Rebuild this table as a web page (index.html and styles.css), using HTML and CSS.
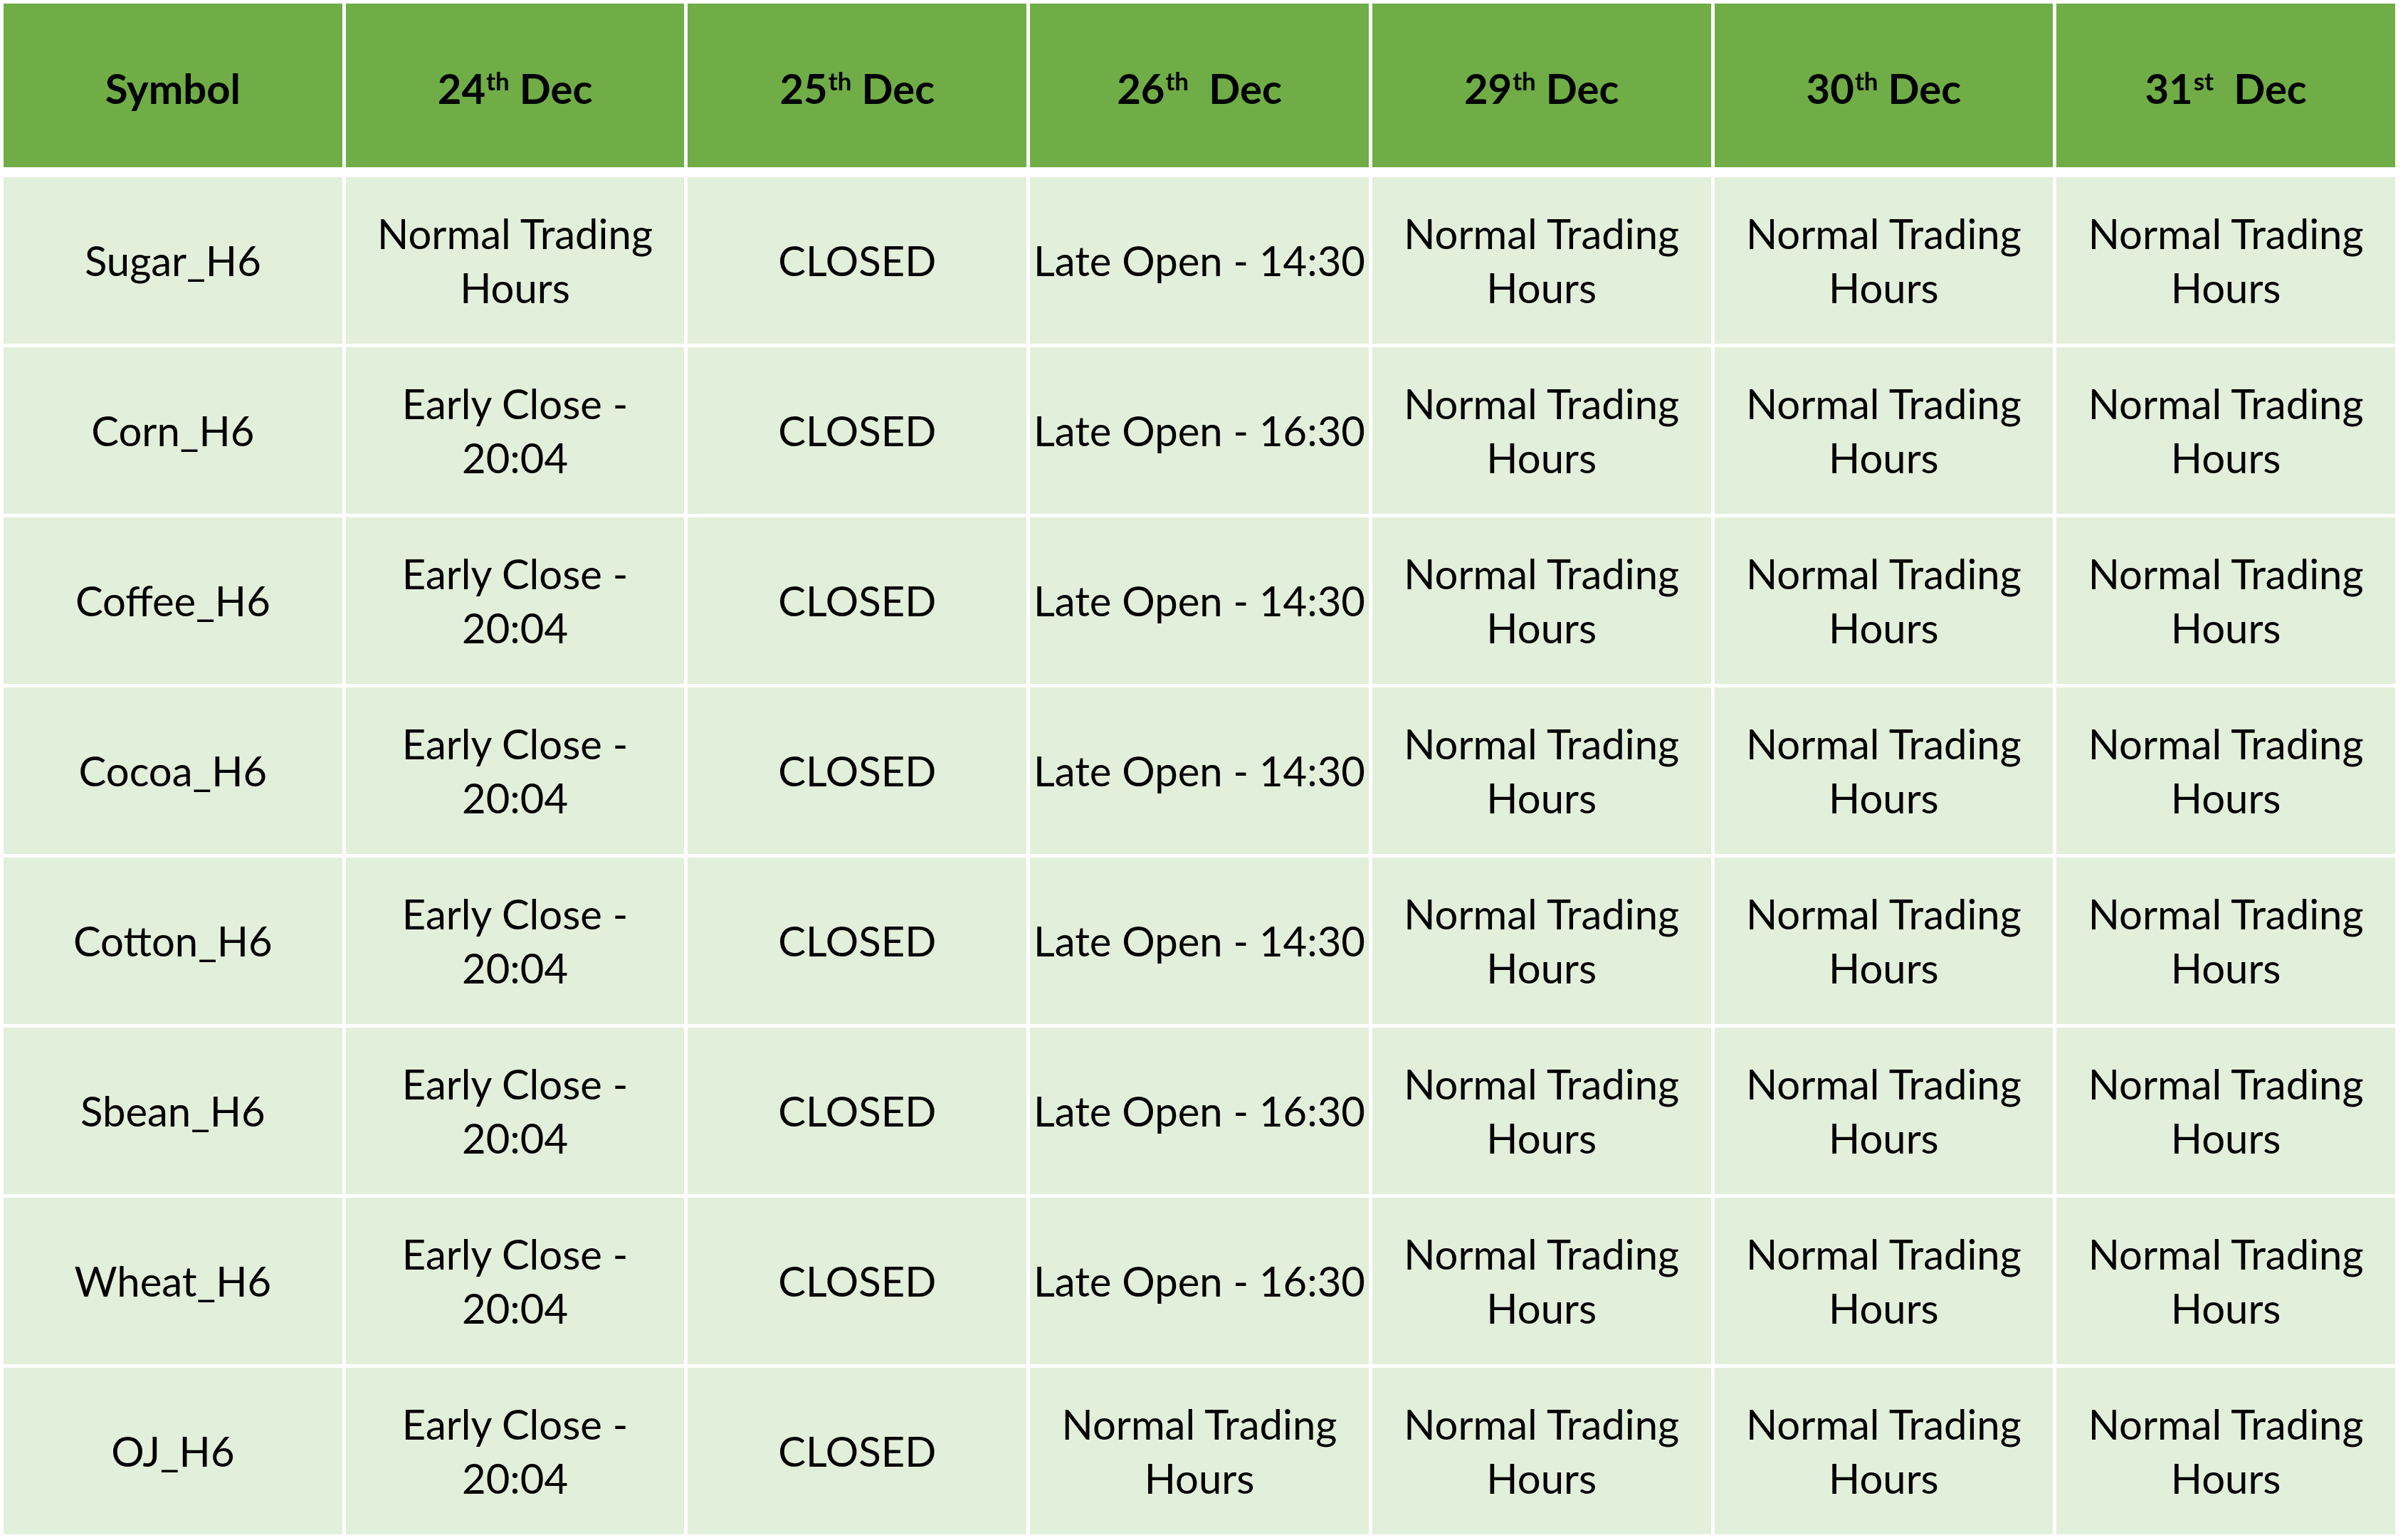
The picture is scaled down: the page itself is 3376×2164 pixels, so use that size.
FILE: index.html
```html
<!DOCTYPE html>
<html lang="en">
<head>
<meta charset="utf-8">
<title>Holiday Trading Hours</title>
<link rel="stylesheet" href="styles.css">
</head>
<body>
<div class="schedule">
  <div class="head">
    <div class="hcell"><span>Symbol</span></div>
    <div class="hcell"><span>24<sup>th</sup> Dec</span></div>
    <div class="hcell"><span>25<sup>th</sup> Dec</span></div>
    <div class="hcell"><span>26<sup>th</sup>&nbsp; Dec</span></div>
    <div class="hcell"><span>29<sup>th</sup> Dec</span></div>
    <div class="hcell"><span>30<sup>th</sup> Dec</span></div>
    <div class="hcell"><span>31<sup>st</sup>&nbsp; Dec</span></div>
  </div>
  <div class="body">
    <div class="cell"><span>Sugar_H6</span></div>
    <div class="cell"><span>Normal Trading<br>Hours</span></div>
    <div class="cell"><span>CLOSED</span></div>
    <div class="cell"><span>Late Open - 14:30</span></div>
    <div class="cell"><span>Normal Trading<br>Hours</span></div>
    <div class="cell"><span>Normal Trading<br>Hours</span></div>
    <div class="cell"><span>Normal Trading<br>Hours</span></div>

    <div class="cell"><span>Corn_H6</span></div>
    <div class="cell"><span>Early Close -<br>20:04</span></div>
    <div class="cell"><span>CLOSED</span></div>
    <div class="cell"><span>Late Open - 16:30</span></div>
    <div class="cell"><span>Normal Trading<br>Hours</span></div>
    <div class="cell"><span>Normal Trading<br>Hours</span></div>
    <div class="cell"><span>Normal Trading<br>Hours</span></div>

    <div class="cell"><span>Coffee_H6</span></div>
    <div class="cell"><span>Early Close -<br>20:04</span></div>
    <div class="cell"><span>CLOSED</span></div>
    <div class="cell"><span>Late Open - 14:30</span></div>
    <div class="cell"><span>Normal Trading<br>Hours</span></div>
    <div class="cell"><span>Normal Trading<br>Hours</span></div>
    <div class="cell"><span>Normal Trading<br>Hours</span></div>

    <div class="cell"><span>Cocoa_H6</span></div>
    <div class="cell"><span>Early Close -<br>20:04</span></div>
    <div class="cell"><span>CLOSED</span></div>
    <div class="cell"><span>Late Open - 14:30</span></div>
    <div class="cell"><span>Normal Trading<br>Hours</span></div>
    <div class="cell"><span>Normal Trading<br>Hours</span></div>
    <div class="cell"><span>Normal Trading<br>Hours</span></div>

    <div class="cell"><span>Cotton_H6</span></div>
    <div class="cell"><span>Early Close -<br>20:04</span></div>
    <div class="cell"><span>CLOSED</span></div>
    <div class="cell"><span>Late Open - 14:30</span></div>
    <div class="cell"><span>Normal Trading<br>Hours</span></div>
    <div class="cell"><span>Normal Trading<br>Hours</span></div>
    <div class="cell"><span>Normal Trading<br>Hours</span></div>

    <div class="cell"><span>Sbean_H6</span></div>
    <div class="cell"><span>Early Close -<br>20:04</span></div>
    <div class="cell"><span>CLOSED</span></div>
    <div class="cell"><span>Late Open - 16:30</span></div>
    <div class="cell"><span>Normal Trading<br>Hours</span></div>
    <div class="cell"><span>Normal Trading<br>Hours</span></div>
    <div class="cell"><span>Normal Trading<br>Hours</span></div>

    <div class="cell"><span>Wheat_H6</span></div>
    <div class="cell"><span>Early Close -<br>20:04</span></div>
    <div class="cell"><span>CLOSED</span></div>
    <div class="cell"><span>Late Open - 16:30</span></div>
    <div class="cell"><span>Normal Trading<br>Hours</span></div>
    <div class="cell"><span>Normal Trading<br>Hours</span></div>
    <div class="cell"><span>Normal Trading<br>Hours</span></div>

    <div class="cell"><span>OJ_H6</span></div>
    <div class="cell"><span>Early Close -<br>20:04</span></div>
    <div class="cell"><span>CLOSED</span></div>
    <div class="cell"><span>Normal Trading<br>Hours</span></div>
    <div class="cell"><span>Normal Trading<br>Hours</span></div>
    <div class="cell"><span>Normal Trading<br>Hours</span></div>
    <div class="cell"><span>Normal Trading<br>Hours</span></div>
  </div>
</div>
</body>
</html>
```
FILE: styles.css
```css
html, body {
  margin: 0;
  padding: 0;
  background: #ffffff;
}

body {
  font-family: Lato, "Open Sans", "Liberation Sans", sans-serif;
  color: #000000;
}

.schedule {
  width: 3360px;
  margin: 5px 0 0 5px;
  display: flex;
  flex-direction: column;
  gap: 14px;
}

.head,
.body {
  display: grid;
  grid-template-columns: repeat(7, 1fr);
  column-gap: 5px;
}

.head {
  grid-template-rows: 230px;
}

.body {
  grid-auto-rows: 234px;
  row-gap: 5px;
}

.hcell,
.cell {
  display: flex;
  align-items: center;
  justify-content: center;
  text-align: center;
  white-space: nowrap;
}

.hcell {
  background: #70ad47;
  font-weight: 700;
  font-size: 58px;
  line-height: 70px;
  padding-top: 8px;
  box-sizing: border-box;
}

.hcell sup {
  font-size: 0.6em;
  line-height: 0;
  vertical-align: 0.55em;
  margin-left: 1px;
}

.cell {
  background: #e2efda;
  font-size: 58px;
  line-height: 76px;
}
```
